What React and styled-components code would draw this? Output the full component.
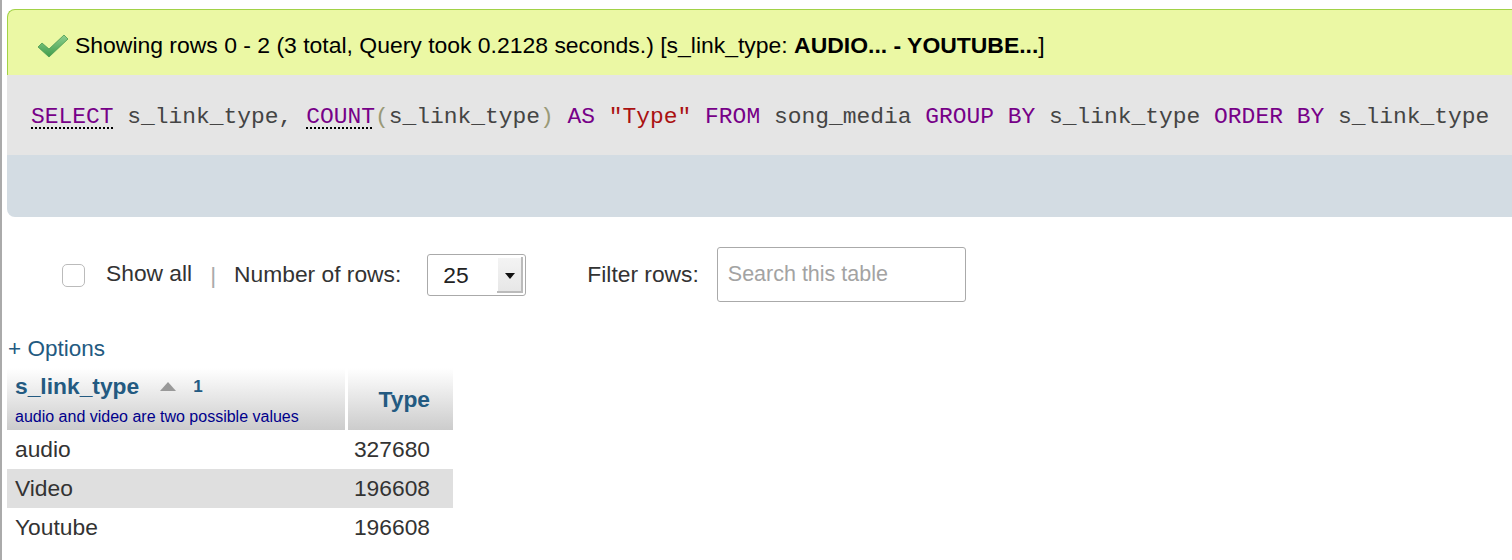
import React from "react";
import styled, { createGlobalStyle } from "styled-components";

const Global = createGlobalStyle`
  html, body { margin: 0; padding: 0; background: #fff; }
  body { font-family: "Liberation Sans", Arial, sans-serif; color: #444; }
`;

const Page = styled.div`
  min-height: 560px;
  border-left: 2px solid #aaa;
  padding: 9px 0 0 5px;
  box-sizing: border-box;
  overflow: hidden;
`;

const Panel = styled.div`
  margin-right: -4px;
`;

const Success = styled.div`
  background: #ebf8a4;
  border-top: 1px solid #a2d246;
  border-left: 1px solid #a2d246;
  border-top-left-radius: 8px;
  display: flex;
  align-items: center;
  padding: 6px 0 0 29px;
  box-sizing: border-box;
  height: 66px;
  gap: 6px;
  font-size: 22.95px;
  color: #000;
  b { font-weight: bold; }
`;

const SqlBox = styled.div`
  height: 80px;
  box-sizing: border-box;
  background: #e5e5e5;
  display: flex;
  align-items: center;
  padding: 3px 0 0 24px;
  font-family: "Liberation Mono", "Courier New", monospace;
  font-size: 22.93px;
  color: #444;
`;

const Code = styled.span`
  white-space: pre;
`;

const Kw = styled.span`
  color: #770088;
  text-decoration: ${({ $link }) => ($link ? "underline dotted #000" : "none")};
  text-decoration-thickness: 2px;
  text-underline-offset: 5px;
`;

const Str = styled.span`
  color: #aa1111;
`;

const Paren = styled.span`
  color: #999977;
`;

const Tools = styled.div`
  height: 62px;
  background: #d3dce3;
  border-bottom-left-radius: 8px;
`;

const Controls = styled.div`
  display: flex;
  align-items: center;
  height: 54px;
  margin: 30px 0 0 55px;
  font-size: 22.8px;
  color: #333;
`;

const Check = styled.span`
  width: 21px;
  height: 21px;
  border: 1px solid #bbb;
  border-radius: 5px;
  background: #fff;
  margin-right: 21px;
  margin-top: 2px;
`;

const Label = styled.span`
  margin-right: ${({ $mr }) => $mr}px;
  position: relative;
  top: ${({ $up }) => ($up ? "-1px" : "0")};
`;

const Sep = styled.span`
  color: #aaa;
  margin-right: 18px;
  margin-top: 2px;
`;

const Select = styled.div`
  width: 97px;
  height: 40px;
  border: 1px solid #aaa;
  border-radius: 3px;
  display: flex;
  align-items: stretch;
  margin-right: 61px;
  margin-top: 2px;
  overflow: hidden;
`;

const SelectVal = styled.span`
  flex: 1;
  display: flex;
  align-items: center;
  padding-left: 15px;
  color: #222;
`;

const SelectBtn = styled.span`
  width: 26px;
  margin: 2px 2px 2px 0;
  background: linear-gradient(#f4f4f4, #e6e6e6);
  box-shadow: inset -2px -2px 0 #bbb, inset 1px 1px 0 #fff;
  display: flex;
  align-items: center;
  justify-content: center;
  &::after {
    content: "";
    border-left: 5px solid transparent;
    border-right: 5px solid transparent;
    border-top: 6px solid #111;
    margin-top: 1px;
  }
`;

const Search = styled.div`
  width: 237px;
  height: 53px;
  margin-top: 1px;
  border: 1px solid #aaa;
  border-radius: 3px;
  display: flex;
  align-items: center;
  padding-left: 10px;
  color: #a3a3a3;
  font-size: 21.5px;
`;

const Options = styled.div`
  margin: 35px 0 6px 1px;
  font-size: 22.5px;
  color: #235a81;
  line-height: 26px;
`;

const Table = styled.table`
  border-collapse: separate;
  border-spacing: 0;
  width: 446px;
  font-size: 22.8px;
`;

const Th = styled.th`
  height: 62px;
  padding: 0 ${({ $right }) => ($right ? "23px" : "8px")} 0 8px;
  text-align: ${({ $right }) => ($right ? "right" : "left")};
  vertical-align: middle;
  background: linear-gradient(#fff, #cccccc);
  border-left: ${({ $right }) => ($right ? "3px solid #fff" : "0")};
  color: #235a81;
  font-weight: bold;
  box-sizing: border-box;
  width: ${({ $right }) => ($right ? "108px" : "338px")};
`;

const HeadTop = styled.div`
  display: flex;
  align-items: center;
  margin-top: 1px;
`;

const Sort = styled.span`
  border-left: 8px solid transparent;
  border-right: 8px solid transparent;
  border-bottom: 9px solid #999;
  margin: 0 17px 0 21px;
`;

const SortNum = styled.span`
  font-size: 17px;
  font-weight: bold;
`;

const Comment = styled.div`
  font-size: 16px;
  font-weight: normal;
  color: #00008b;
  margin-top: 8px;
`;

const Td = styled.td`
  height: 39px;
  padding: 0 ${({ $right }) => ($right ? "23px" : "8px")} 0 8px;
  text-align: ${({ $right }) => ($right ? "right" : "left")};
  background: ${({ $odd }) => ($odd ? "#dfdfdf" : "#fff")};
  color: #333;
`;

const CheckMark = () => (
  <svg width="32" height="24" viewBox="0 0 32 24">
    <defs>
      <linearGradient id="ck" x1="0" y1="0" x2="0" y2="1">
        <stop offset="0" stopColor="#8fd08f" />
        <stop offset="1" stopColor="#3f9c4a" />
      </linearGradient>
    </defs>
    <path
      d="M1 13 L5 9 L12 15 L27 1 L31 5 L12 23 Z"
      fill="url(#ck)"
      stroke="#4a9a52"
      strokeWidth="0.8"
      strokeLinejoin="round"
    />
  </svg>
);

const rows = [
  ["audio", "327680"],
  ["Video", "196608"],
  ["Youtube", "196608"],
];

export default function App() {
  return (
    <>
      <Global />
      <Page>
        <Panel>
          <Success>
            <CheckMark />
            <span>
              Showing rows 0 - 2 (3 total, Query took 0.2128 seconds.) [s_link_type: <b>AUDIO... - YOUTUBE...</b>]
            </span>
          </Success>
          <SqlBox>
            <Code>
              <Kw $link>SELECT</Kw>{" s_link_type, "}<Kw $link>COUNT</Kw>
              <Paren>(</Paren>s_link_type<Paren>)</Paren>{" "}<Kw>AS</Kw>{" "}<Str>"Type"</Str>{" "}
              <Kw>FROM</Kw>{" song_media "}<Kw>GROUP</Kw>{" "}<Kw>BY</Kw>{" s_link_type "}
              <Kw>ORDER</Kw>{" "}<Kw>BY</Kw>{" s_link_type"}
            </Code>
          </SqlBox>
          <Tools />
        </Panel>

        <Controls>
          <Check />
          <Label $mr={18} $up>Show all</Label>
          <Sep>|</Sep>
          <Label $mr={26}>Number of rows:</Label>
          <Select>
            <SelectVal>25</SelectVal>
            <SelectBtn />
          </Select>
          <Label $mr={18}>Filter rows:</Label>
          <Search>Search this table</Search>
        </Controls>

        <Options>+ Options</Options>

        <Table>
          <thead>
            <tr>
              <Th>
                <HeadTop>
                  s_link_type
                  <Sort />
                  <SortNum>1</SortNum>
                </HeadTop>
                <Comment>audio and video are two possible values</Comment>
              </Th>
              <Th $right>Type</Th>
            </tr>
          </thead>
          <tbody>
            {rows.map(([name, count], i) => (
              <tr key={name}>
                <Td $odd={i % 2 === 1}>{name}</Td>
                <Td $odd={i % 2 === 1} $right>{count}</Td>
              </tr>
            ))}
          </tbody>
        </Table>
      </Page>
    </>
  );
}
